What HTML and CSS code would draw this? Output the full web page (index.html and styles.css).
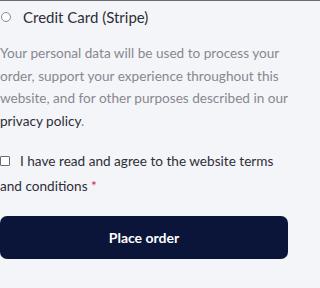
FILE: index.html
```html
<!DOCTYPE html>
<html>
<head>
<meta charset="utf-8">
<link rel="stylesheet" href="styles.css">
</head>
<body>
<div class="topline"></div>
<div class="checkout">
  <label class="method">
    <span class="radio"></span>
    <span class="method-name">Credit Card (Stripe)</span>
  </label>
  <p class="privacy">Your personal data will be used to process your order, support your experience throughout this website, and for other purposes described in our <a class="link">privacy policy</a>.</p>
  <p class="terms required"><span class="checkbox"></span>I have read and agree to the website terms and conditions</p>
  <button class="place">Place order</button>
</div>
</body>
</html>
```
FILE: styles.css
```css
html, body {
  margin: 0;
  padding: 0;
  background: #f4f5f9;
}
body {
  font-family: "Lato", "Noto Sans", sans-serif;
}
.topline {
  height: 1px;
  background: #6b6b72;
}
.checkout {
  display: flex;
  flex-direction: column;
  width: 288px;
}
.method {
  display: flex;
  align-items: center;
  gap: 12px;
  margin-top: 7px;
  height: 18px;
}
.radio {
  width: 8px;
  height: 8px;
  border: 1px solid #8a8a90;
  border-radius: 50%;
  margin-left: 1px;
  background: #fff;
}
.method-name {
  font-size: 15px;
  color: #2e2e38;
}
.privacy {
  margin: 16px 0 0;
  font-size: 13.6px;
  line-height: 22.7px;
  color: #87888f;
}
.link {
  color: #2e2e38;
}
.terms {
  margin: 16px 0 0;
  font-size: 13.6px;
  line-height: 25px;
  color: #2e2e38;
}
.required::after {
  content: " *";
  color: #d0203a;
}
.checkbox {
  display: inline-block;
  width: 8px;
  height: 8px;
  border: 1px solid #6b6b72;
  border-radius: 1px;
  background: #fff;
  margin-right: 10px;
  vertical-align: 0px;
}
.place {
  margin-top: 17px;
  height: 43px;
  width: 288px;
  border: none;
  border-radius: 7px;
  background: #0a1539;
  color: #fff;
  font-family: "Lato", sans-serif;
  font-size: 14px;
  font-weight: 700;
}
```
